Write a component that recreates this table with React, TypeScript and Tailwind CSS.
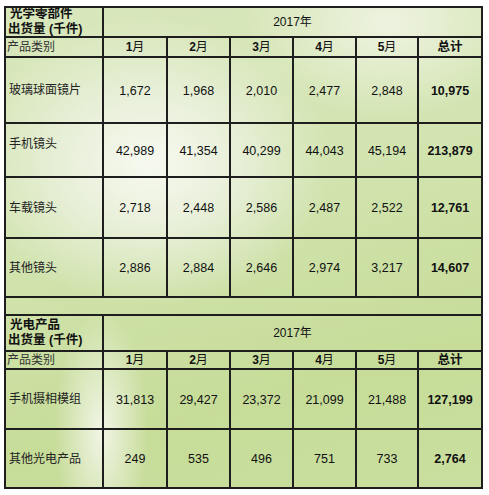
import React from 'react';

const months = ['1', '2', '3', '4', '5'];

type Row = { label: string; values: string[]; total: string; h: string; top?: boolean };

const optics: Row[] = [
  { label: '玻璃球面镜片', values: ['1,672', '1,968', '2,010', '2,477', '2,848'], total: '10,975', h: 'h-[66px]' },
  { label: '手机镜头', values: ['42,989', '41,354', '40,299', '44,043', '45,194'], total: '213,879', h: 'h-[54px]', top: true },
  { label: '车载镜头', values: ['2,718', '2,448', '2,586', '2,487', '2,522'], total: '12,761', h: 'h-[61px]' },
  { label: '其他镜头', values: ['2,886', '2,884', '2,646', '2,974', '3,217'], total: '14,607', h: 'h-[59px]' },
];

const photo: Row[] = [
  { label: '手机摄相模组', values: ['31,813', '29,427', '23,372', '21,099', '21,488'], total: '127,199', h: 'h-[60px]' },
  { label: '其他光电产品', values: ['249', '535', '496', '751', '733'], total: '2,764', h: 'h-[59px]' },
];

const cell = 'border-r-2 border-b-2 border-[#1e1e1e]';

const Header = ({ title, h }: { title: string; h: string }) => (
  <>
    <div className={`${cell} ${h} flex flex-col justify-center pl-[2px] text-[12.5px] font-bold leading-[15px]`}>
      <span className="pl-[2px]">{title}</span>
      <span>出货量 (千件)</span>
    </div>
    <div className={`${cell} ${h} col-span-6 flex items-center justify-center text-[12px]`}>2017年</div>
  </>
);

const SubHeader = ({ h }: { h: string }) => (
  <>
    <div className={`${cell} ${h} flex items-center pl-[1px] text-[12px] text-[#333]`}>产品类别</div>
    {months.map((m) => (
      <div key={m} className={`${cell} ${h} flex items-center justify-center text-[12px]`}>
        <span className="font-bold">{m}</span>月
      </div>
    ))}
    <div className={`${cell} ${h} flex items-center justify-center text-[12.5px] font-bold`}>总计</div>
  </>
);

const DataRows = ({ rows }: { rows: Row[] }) => (
  <>
    {rows.map((r) => (
      <React.Fragment key={r.label}>
        <div
          className={`${cell} ${r.h} flex pl-[3px] text-[12px] text-[#222] ${r.top ? 'items-start pt-[11px]' : 'items-center'}`}
        >
          {r.label}
        </div>
        {r.values.map((v, i) => (
          <div key={i} className={`${cell} ${r.h} flex items-center justify-center pt-[2px] text-[12.5px]`}>
            {v}
          </div>
        ))}
        <div className={`${cell} ${r.h} flex items-center justify-center pt-[2px] text-[12.5px] font-bold`}>{r.total}</div>
      </React.Fragment>
    ))}
  </>
);

export default function App() {
  return (
    <div className="w-[489px] h-[495px] bg-white overflow-hidden font-['Liberation_Sans','Noto_Sans_CJK_SC',sans-serif] text-[#111]">
      <div className="mt-[6px] ml-[4px] w-[479px] border-l-2 border-t-2 border-[#1e1e1e] bg-[radial-gradient(ellipse_38%_30%_at_30%_32%,#f7f9f0_0%,#e9f0da_45%,transparent_100%),radial-gradient(ellipse_30%_20%_at_80%_3%,#eef3e0_0%,transparent_100%),radial-gradient(ellipse_10%_25%_at_20%_88%,#f1f5e6_0%,transparent_100%),linear-gradient(165deg,#d9e7bd_0%,#d2e4b0_40%,#c6dc98_75%,#cadf9f_100%)]">
        <div className="grid grid-cols-[98px_64px_63px_63px_63px_62px_64px]">
          <Header title="光学零部件" h="h-[30px]" />
          <SubHeader h="h-[20px]" />
          <DataRows rows={optics} />
          <div className={`${cell} h-[18px] col-span-7`} />
          <Header title="光电产品" h="h-[36px]" />
          <SubHeader h="h-[18px]" />
          <DataRows rows={photo} />
        </div>
      </div>
    </div>
  );
}
